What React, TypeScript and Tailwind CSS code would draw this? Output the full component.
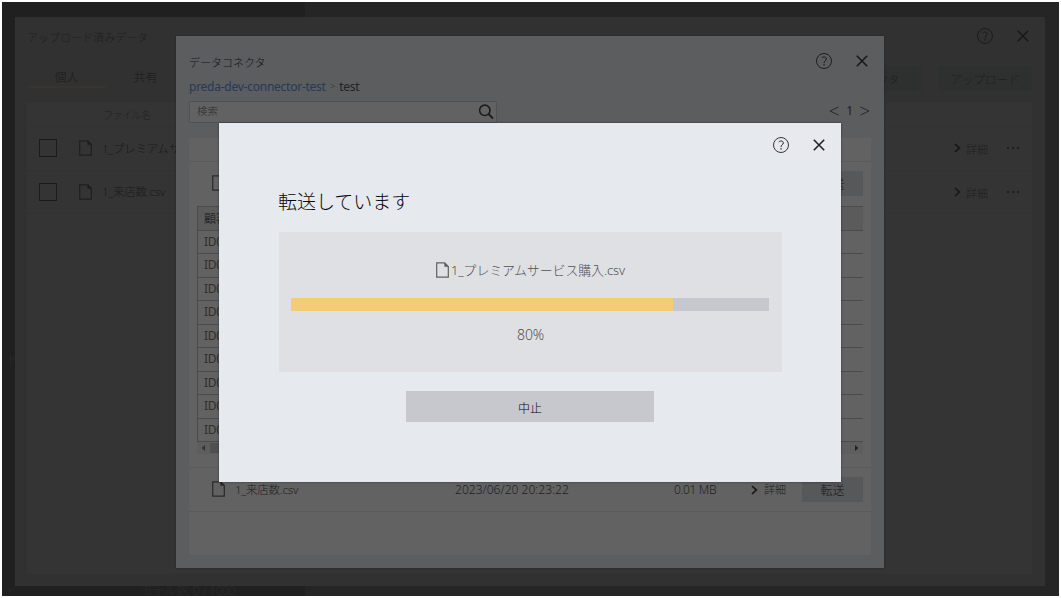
import type { ReactNode } from "react";

type IconProps = { className?: string };

function HelpIcon({ className = "" }: IconProps) {
  return (
    <svg viewBox="0 0 18 18" className={`size-[18px] shrink-0 ${className}`} fill="none" stroke="currentColor">
      <circle cx="9" cy="9" r="7.500" strokeWidth=".9" />
      <path d="M6.700 5.900C7.700 4.600 11.400 4.500 11.300 7c-.1 1.800-2.300 1.900-2.300 4" strokeWidth="1" />
      <path d="M8.400 12.900h1.300" strokeWidth="1.300" />
    </svg>
  );
}

function CloseIcon({ className = "" }: IconProps) {
  return (
    <svg viewBox="0 0 12 12" className={`size-3 shrink-0 ${className}`} fill="none" stroke="currentColor" strokeWidth="1.6">
      <path d="M.8.8l10.400 10.400M11.200.8L.8 11.200" />
    </svg>
  );
}

function FileIcon({ className = "" }: IconProps) {
  return (
    <svg viewBox="0 0 13 16" className={`h-4 w-[13px] shrink-0 ${className}`} fill="none" stroke="currentColor" strokeWidth="1.2">
      <path d="M.7.9h8l3.600 3.600v10.600H.7z" />
      <path d="M8.600 1v3.600h3.600z" fill="currentColor" strokeWidth=".5" />
    </svg>
  );
}

function Chevron({ className = "" }: IconProps) {
  return (
    <svg viewBox="0 0 7 10" className={`h-2.5 w-[7px] shrink-0 ${className}`} fill="none" stroke="currentColor" strokeWidth="1.7">
      <path d="M1 1l4.300 4L1 9" />
    </svg>
  );
}

function SearchIcon() {
  return (
    <svg viewBox="0 0 16 16" className="size-4 text-[#1d1d1d]" fill="none" stroke="currentColor">
      <circle cx="6.800" cy="6.300" r="5.200" strokeWidth="1.600" />
      <path d="M10.500 10l4.500 4.500" strokeWidth="2" />
    </svg>
  );
}

function WindowActions({ className = "" }: IconProps) {
  return (
    <div className={`flex items-center gap-[23px] ${className}`}>
      <HelpIcon />
      <CloseIcon />
    </div>
  );
}

function UploadRow({ name }: { name: string }) {
  return (
    <div className="flex h-[43.7px] items-center border-b border-[#313131] pl-3 text-[#1f1f1f]">
      <div className="size-[18px] border-[1.5px] border-[#1b1b1b]" />
      <FileIcon className="ml-[22px]" />
      <span className="ml-[10px] w-[200px] text-[11.5px] tracking-[-0.2px] text-[#1a1a1a]">{name}</span>
      <Chevron className="ml-auto text-[#161616]" />
      <span className="ml-[5px] mt-1 text-[11px] leading-4">詳細</span>
      <span className="ml-[19px] mr-[13px] flex gap-[3px]">
        <i className="size-[2px] bg-[#1e1e1e]" />
        <i className="size-[2px] bg-[#1e1e1e]" />
        <i className="size-[2px] bg-[#1e1e1e]" />
      </span>
    </div>
  );
}

function UploadedData() {
  return (
    <section className="absolute left-[15px] top-[17px] flex h-[569px] w-[1030px] flex-col bg-[#313131] pl-3 pr-[13px] text-[#1f1f1f]">
      <header className="flex h-[41px] items-center justify-between">
        <h1 className="mt-[2px] text-[11px]">アップロード済みデータ</h1>
        <WindowActions className="mb-1 mr-[3px] text-[#191919]" />
      </header>
      <nav className="flex h-[45px] items-start pt-2">
        <div className="flex h-[22px] w-[79px] items-center justify-center border-b-2 border-[#37342a] pt-[3px] text-[12px] text-[#1a1a1a]">
          個人
        </div>
        <div className="flex h-[22px] w-[79px] items-center justify-center pt-[2px] text-[12px] text-[#1a1a1a]">共有</div>
        <div className="ml-auto flex h-[25px] w-[125px] items-center justify-center bg-[#2e2f2f] pt-[2px] text-[11.5px]">データコネクタ</div>
        <div className="ml-4 flex h-[25px] w-[94px] items-center justify-center bg-[#2e2f2f] pt-[2px] text-[11.5px]">アップロード</div>
      </nav>
      <div className="h-[471px] bg-[#343434]">
        <div className="flex h-6 items-center border-b border-[#313131] pl-[76px] pt-[2px] text-[10px] text-[#222]">
          <span className="tracking-[-0.5px]">ファイル名</span>
        </div>
        <UploadRow name="1_プレミアムサービス購入.csv" />
        <UploadRow name="1_来店数.csv" />
      </div>
    </section>
  );
}

function TransferButton() {
  return (
    <div className="flex h-[25px] w-[61px] items-center justify-center bg-[#56585a] pt-[2px] text-[12px] text-[#161616]">転送</div>
  );
}

function ConnectorRow({ name, date, size }: { name: string; date: string; size: string }) {
  return (
    <div className="flex h-[43px] shrink-0 items-center pl-[23px] pr-2 text-[#1f1f1f]">
      <FileIcon className="mb-[2px] text-[#2a2a2a]" />
      <span className="ml-[10px] w-[220px] text-[11.5px] tracking-[-0.2px]">{name}</span>
      <span className="w-[219px] text-[12px] tracking-[0.03px]">{date}</span>
      <span className="w-[77px] text-[12px] tracking-[-0.35px]">{size}</span>
      <Chevron className="text-[#161616]" />
      <span className="ml-[6px] mt-[2px] text-[11px]">詳細</span>
      <div className="ml-auto">
        <TransferButton />
      </div>
    </div>
  );
}

const previewIds = ["ID001", "ID002", "ID003", "ID004", "ID005", "ID006", "ID007", "ID008", "ID009"];

function PreviewCell({ children, head = false }: { children: ReactNode; head?: boolean }) {
  return (
    <div
      className={`flex h-[23.5px] items-center border-b border-l border-[#4b4b4b] pl-[6px] text-[12px] tracking-[-0.3px] ${
        head ? "bg-[#5b5b5b] pt-[2px] text-[11px] text-[#161616]" : "font-normal text-[#2e2e2e]"
      }`}
    >
      {children}
    </div>
  );
}

function DataConnector() {
  return (
    <section className="absolute left-[176px] top-[36px] flex h-[532px] w-[708px] flex-col bg-[#5b5d5f] px-[13px] text-[#222] shadow-[0_0_2px_rgba(0,0,0,0.3)]">
      <header className="flex h-[40px] items-center justify-between pt-[10px]">
        <h2 className="pt-[5px] text-[11px] text-[#141414]">データコネクタ</h2>
        <WindowActions className="mr-[3px] text-[#191919]" />
      </header>
      <div className="flex h-[25px] items-center pb-[4px] text-[12px] tracking-[-0.25px]">
        <span className="font-normal text-[#26395a]">preda-dev-connector-test</span>
        <span className="mx-1 text-[10px] text-[#333]">&gt;</span>
        <span className="font-normal">test</span>
      </div>
      <div className="flex h-[22px] items-center justify-between">
        <div className="flex h-[22px] w-[308px] items-center justify-between border border-[#505254] bg-[#626262] pl-[7px] pr-[2px] text-[10.5px] text-[#2c2c2c]">
          <span>検索</span>
          <SearchIcon />
        </div>
        <div className="mb-[2px] flex items-center gap-[7px] pr-px text-[12px]">
          <svg viewBox="0 0 10 10" className="size-2.5" fill="none" stroke="#292929">
            <path d="M9.500 1L1 5l8.500 4" />
          </svg>
          <span className="font-normal">1</span>
          <svg viewBox="0 0 10 10" className="size-2.5" fill="none" stroke="#292929">
            <path d="M.5 1L9 5L.5 9" />
          </svg>
        </div>
      </div>
      <div className="mt-[15px] flex h-[417px] w-[682px] flex-col bg-[#626262]">
        <div className="h-6 shrink-0 border-b border-[#5a5a5a]" />
        <ConnectorRow name="1_プレミアムサービス購入.csv" date="2023/06/20 20:23:22" size="0.01 MB" />
        <div className="mx-2 mt-px h-[248px] shrink-0 border-t border-[#4b4b4b]">
          <PreviewCell head>顧客ID</PreviewCell>
          {previewIds.map((id) => (
            <PreviewCell key={id}>{id}</PreviewCell>
          ))}
          <div className="flex h-[12px] items-center justify-between bg-[#5e5e5e] pl-[4px] pr-[4px]">
            <svg viewBox="0 0 5 6" className="h-1.5 w-[5px]" fill="#303030">
              <path d="M4 0v6L.8 3z" />
            </svg>
            <div className="ml-1 mr-auto h-2.5 w-[380px] bg-[#505050]" />
            <svg viewBox="0 0 5 6" className="h-1.5 w-[5px]" fill="#202020">
              <path d="M1 0v6l3.200-3z" />
            </svg>
          </div>
        </div>
        <div className="mt-[13px] border-y border-[#5a5a5a]">
          <ConnectorRow name="1_来店数.csv" date="2023/06/20 20:23:22" size="0.01 MB" />
        </div>
      </div>
    </section>
  );
}

function TransferDialog({ progress }: { progress: number }) {
  return (
    <section className="absolute left-[219px] top-[123px] flex h-[358.5px] w-[622px] flex-col bg-[#e6e9ee] px-[60px] text-[#050505] shadow-[0_0_2px_rgba(0,0,0,0.5)]">
      <WindowActions className="mr-[-44px] mt-[12.500px] self-end text-[#222]" />
      <h2 className="-ml-px mt-[32.500px] h-8 text-[19px] leading-8 tracking-[-0.05px]">転送しています</h2>
      <div className="mt-[13.500px] flex h-[140.500px] w-[503px] flex-col bg-[#dfe0e4] px-3 text-[#505050]">
        <div className="mt-[30.500px] flex h-4 items-center justify-center">
          <FileIcon className="text-[#606060]" />
          <span className="ml-[2px] text-[12.900px] leading-4 tracking-[-0.05px]">1_プレミアムサービス購入.csv</span>
        </div>
        <div className="mt-[19.500px] h-[13px] w-[478px] bg-[#c6c8cd]">
          <div className="h-full bg-[#f3cc75]" style={{ width: `${progress}%` }} />
        </div>
        <div className="mt-[15.500px] text-center text-[14px] leading-[18px] tracking-[-0.2px]">80%</div>
      </div>
      <button className="mt-[19px] flex h-[31px] w-[248px] items-center justify-center self-center bg-[#c6c8cd] pt-[4px] text-[12px] text-[#050505]">
        中止
      </button>
    </section>
  );
}

export default function App() {
  return (
    <div className="h-[598px] w-[1061px] overflow-hidden bg-white p-[2px] font-['Noto_Sans','Noto_Sans_CJK_JP',sans-serif] font-light">
      <div className="flex h-[594px] w-[1057px] overflow-hidden bg-[#252525]">
        <aside className="flex w-[303px] flex-col justify-between bg-[#202020] text-[12px] text-[#2b2b2b]">
          <span className="pl-1 pt-[350px] leading-4">ド</span>
          <div className="flex h-[11px] items-center">
            <span className="pl-[6px]">&lt;</span>
            <span className="pl-[126px] tracking-[-0.3px]">モデル数: 0 / 1000</span>
          </div>
        </aside>
      </div>
      <UploadedData />
      <DataConnector />
      <TransferDialog progress={80} />
    </div>
  );
}
